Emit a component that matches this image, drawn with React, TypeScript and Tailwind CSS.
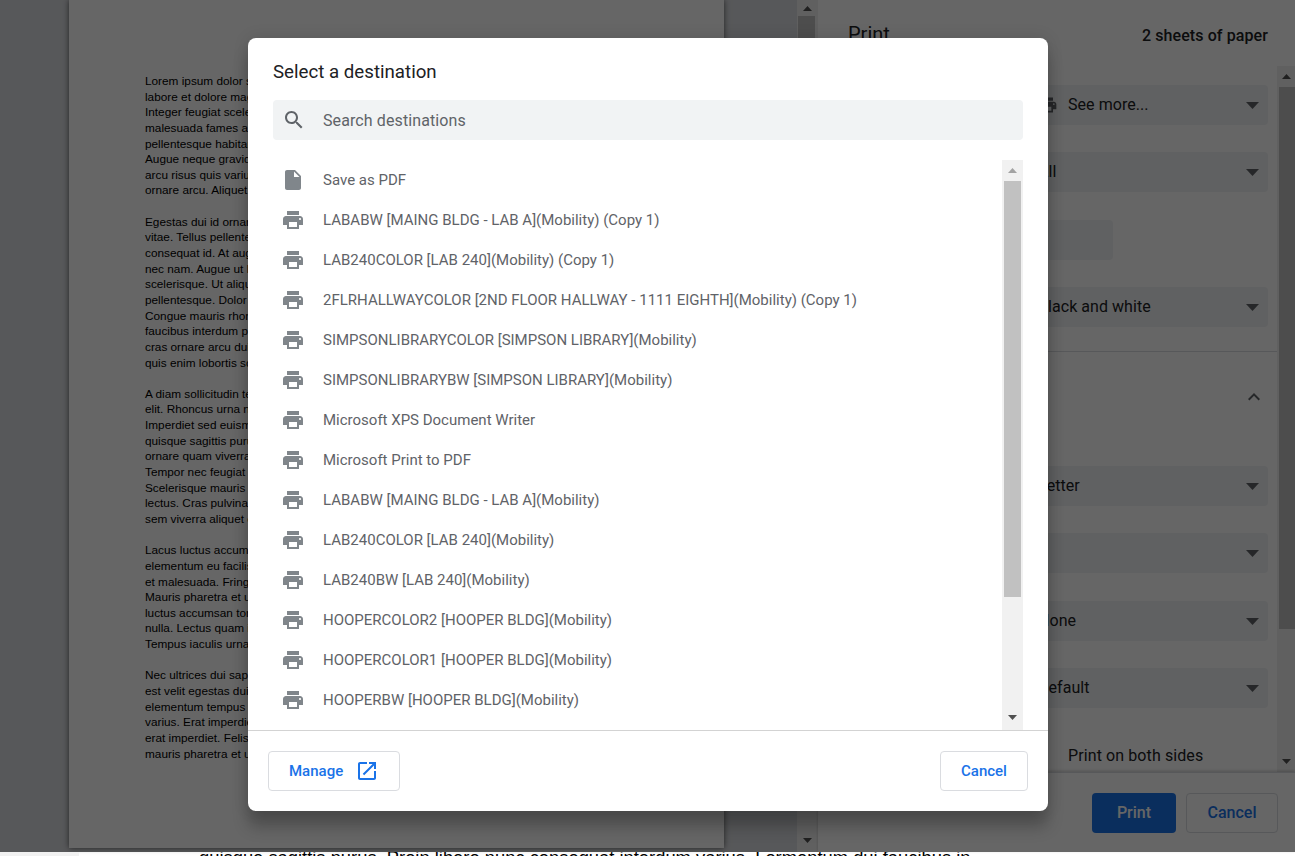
import React from 'react';

const destinations = [
    'LABABW [MAING BLDG - LAB A](Mobility) (Copy 1)',
    'LAB240COLOR [LAB 240](Mobility) (Copy 1)',
    '2FLRHALLWAYCOLOR [2ND FLOOR HALLWAY - 1111 EIGHTH](Mobility) (Copy 1)',
    'SIMPSONLIBRARYCOLOR [SIMPSON LIBRARY](Mobility)',
    'SIMPSONLIBRARYBW [SIMPSON LIBRARY](Mobility)',
    'Microsoft XPS Document Writer',
    'Microsoft Print to PDF',
    'LABABW [MAING BLDG - LAB A](Mobility)',
    'LAB240COLOR [LAB 240](Mobility)',
    'LAB240BW [LAB 240](Mobility)',
    'HOOPERCOLOR2 [HOOPER BLDG](Mobility)',
    'HOOPERCOLOR1 [HOOPER BLDG](Mobility)',
    'HOOPERBW [HOOPER BLDG](Mobility)',
];

const pageLines = [
    'Lorem ipsum dolor sit amet, consectetur adipiscing elit, sed do eiusmod tempor incididunt ut',
    'labore et dolore magna aliqua. Lectus urna duis convallis convallis tellus id interdum.',
    'Integer feugiat scelerisque varius morbi enim nunc faucibus a pellentesque.',
    'malesuada fames ac turpis egestas integer eget aliquet nibh praesent.',
    'pellentesque habitant morbi tristique senectus et netus et malesuada.',
    'Augue neque gravida in fermentum et sollicitudin ac orci phasellus.',
    'arcu risus quis varius quam quisque id diam vel quam elementum.',
    'ornare arcu. Aliquet nibh praesent tristique magna sit amet purus.',
    '',
    'Egestas dui id ornare arcu odio ut sem nulla pharetra diam sit amet.',
    'vitae. Tellus pellentesque eu tincidunt tortor aliquam nulla facilisi.',
    'consequat id. At augue eget arcu dictum varius duis at consectetur.',
    'nec nam. Augue ut lectus arcu bibendum at varius vel pharetra vel.',
    'scelerisque. Ut aliquam purus sit amet luctus venenatis lectus magna.',
    'pellentesque. Dolor sed viverra ipsum nunc aliquet bibendum enim.',
    'Congue mauris rhoncus aenean vel elit scelerisque mauris pellentesque.',
    'faucibus interdum posuere lorem ipsum dolor sit amet consectetur.',
    'cras ornare arcu dui vivamus arcu felis bibendum ut tristique et.',
    'quis enim lobortis scelerisque fermentum dui faucibus in ornare.',
    '',
    'A diam sollicitudin tempor id eu nisl nunc mi ipsum faucibus vitae.',
    'elit. Rhoncus urna neque viverra justo nec ultrices dui sapien eget.',
    'Imperdiet sed euismod nisi porta lorem mollis aliquam ut porttitor.',
    'quisque sagittis purus sit amet volutpat consequat mauris nunc.',
    'ornare quam viverra orci sagittis eu volutpat odio facilisis mauris.',
    'Tempor nec feugiat nisl pretium fusce id velit ut tortor pretium.',
    'Scelerisque mauris pellentesque pulvinar pellentesque habitant morbi.',
    'lectus. Cras pulvinar mattis nunc sed blandit libero volutpat sed.',
    'sem viverra aliquet eget sit amet tellus cras adipiscing enim eu.',
    '',
    'Lacus luctus accumsan tortor posuere ac ut consequat semper viverra.',
    'elementum eu facilisis sed odio morbi quis commodo odio aenean.',
    'et malesuada. Fringilla est ullamcorper eget nulla facilisi etiam.',
    'Mauris pharetra et ultrices neque ornare aenean euismod elementum.',
    'luctus accumsan tortor posuere ac ut consequat semper viverra nam.',
    'nulla. Lectus quam id leo in vitae turpis massa sed elementum.',
    'Tempus iaculis urna id volutpat lacus laoreet non curabitur gravida.',
    '',
    'Nec ultrices dui sapien eget mi proin sed libero enim sed faucibus.',
    'est velit egestas dui id ornare arcu odio ut sem nulla pharetra.',
    'elementum tempus egestas sed sed risus pretium quam vulputate.',
    'varius. Erat imperdiet sed euismod nisi porta lorem mollis aliquam.',
    'erat imperdiet. Felis eget velit aliquet sagittis id consectetur.',
    'mauris pharetra et ultrices neque ornare aenean euismod elementum.',
];

function PrintIcon({ className }: { className: string }) {
    return (
        <svg viewBox="0 0 24 24" className={className} fill="currentColor">
            <path d="M19 8H5c-1.66 0-3 1.34-3 3v6h4v4h12v-4h4v-6c0-1.66-1.34-3-3-3zm-3 11H8v-5h8v5zm3-7c-.55 0-1-.45-1-1s.45-1 1-1 1 .45 1 1-.45 1-1 1zm-1-9H6v4h12V3z" />
        </svg>
    );
}

function Arrow({ up, className }: { up?: boolean; className: string }) {
    return (
        <svg viewBox="0 0 9 5" className={`w-[9px] h-[5px] ${className}`} fill="currentColor">
            <polygon points={up ? '4.5,0 9,5 0,5' : '0,0 9,0 4.5,5'} />
        </svg>
    );
}

function SelectBox({ text, icon, nudge }: { text: string; icon?: boolean; nudge?: boolean }) {
    return (
        <div className={`h-10 w-[238px] ml-[212px] rounded bg-[#f1f3f4] flex items-center pl-2 pr-[9px] text-[16px] tracking-[0.05px] text-[#202124] ${nudge ? 'mt-px' : ''}`}>
            {icon && <PrintIcon className="w-5 h-5 mr-[10px] text-[#5f6368]" />}
            <span>{text}</span>
            <svg viewBox="0 0 13 7" className="w-[13px] h-[7px] ml-auto text-[#5f6368]" fill="currentColor">
                <polygon points="0,0 13,0 6.5,7" />
            </svg>
        </div>
    );
}

function Sidebar() {
    return (
        <div className="w-[477px] flex flex-col bg-white font-['Roboto',sans-serif]">
            <div className="h-[66px] flex items-start justify-between pl-[30px] pr-[27px] pt-[22px] shrink-0">
                <span className="text-[20px] leading-6 text-[#202124]">Print</span>
                <span className="text-[16px] leading-[28px] tracking-[0.1px] font-medium text-[#202124]">2 sheets of paper</span>
            </div>
            <div className="flex-1 flex min-h-0">
                <div className="w-[459px] pt-[19px]">
                    <div className="flex flex-col gap-[27px]">
                        <SelectBox text="See more..." icon />
                        <SelectBox text="All" />
                        <div className="h-10 w-[83px] ml-[212px] mt-px rounded bg-[#f1f3f4]" />
                        <SelectBox text="Black and white" />
                    </div>
                    <div className="mt-6 border-t border-[#dadce0]" />
                    <div className="h-[92px] flex items-center justify-end pr-[13px] pb-[2px]">
                        <svg viewBox="0 0 24 24" className="w-6 h-6 text-[#5f6368] mr-[-2px]" fill="currentColor">
                            <path d="M7.41 15.41L12 10.83l4.59 4.58L18 14l-6-6-6 6z" />
                        </svg>
                    </div>
                    <div className="flex flex-col gap-[27px] mt-[22px]">
                        <SelectBox text="Letter" />
                        <SelectBox text="1" />
                        <SelectBox text="None" nudge />
                        <SelectBox text="Default" />
                    </div>
                    <div className="ml-[250px] mt-[38px] text-[16px] tracking-[0.1px] leading-5 text-[#202124]">Print on both sides</div>
                </div>
                <div className="w-[18px] flex flex-col bg-[#f1f1f1]">
                    <div className="h-[21px] flex items-center justify-center"><Arrow up className="text-[#505050]" /></div>
                    <div className="h-[542px] ml-[2px] bg-[#c1c1c1]" />
                    <div className="flex-1" />
                    <div className="h-[21px] flex items-center justify-center"><Arrow className="text-[#505050]" /></div>
                </div>
            </div>
            <div className="h-20 shrink-0 border-t border-[#dadce0] shadow-[0_-1px_3px_rgba(0,0,0,0.2)] flex items-center justify-end gap-[10px] pr-[17px] text-[16px] font-medium">
                <div className="h-10 w-[84px] rounded bg-[#1a73e8] text-white flex items-center justify-center pt-px">Print</div>
                <div className="h-10 w-[92px] rounded border border-[#dadce0] text-[#1a73e8] flex items-center justify-center pt-px">Cancel</div>
            </div>
        </div>
    );
}

function DestinationDialog() {
    return (
        <div className="w-[800px] h-[773px] rounded-lg bg-white flex flex-col font-['Roboto',sans-serif] shadow-[0_0_16px_rgba(0,0,0,0.12),0_16px_16px_rgba(0,0,0,0.24)]">
            <div className="h-[62px] shrink-0 pl-[25px] pt-[21px] text-[18.7px] leading-[27px] text-[#202124]">Select a destination</div>
            <div className="mx-[25px] h-10 shrink-0 rounded bg-[#f1f3f4] flex items-center pl-[9px] text-[16px] tracking-[0.1px] text-[#5f6368]">
                <svg viewBox="0 0 24 24" className="w-6 h-6 mr-[17px]" fill="currentColor">
                    <path d="M15.5 14h-.79l-.28-.27C15.41 12.59 16 11.11 16 9.5 16 5.91 13.09 3 9.5 3S3 5.91 3 9.5 5.91 16 9.5 16c1.61 0 3.09-.59 4.23-1.57l.27.28v.79l5 4.99L20.49 19l-4.99-5zm-6 0C7.01 14 5 11.99 5 9.5S7.01 5 9.5 5 14 7.01 14 9.5 11.99 14 9.5 14z" />
                </svg>
                <span className="pt-px">Search destinations</span>
            </div>
            <div className="mt-5 mx-[25px] h-[570px] shrink-0 flex">
                <div className="flex-1 overflow-hidden text-[15px] text-[#5f6368]">
                    <div className="h-10 flex items-center pl-2">
                        <svg viewBox="0 0 24 24" className="w-6 h-6 mr-[18px] text-[#80868b]" fill="currentColor">
                            <path d="M6 2c-1.1 0-2 .9-2 2v16c0 1.1.9 2 2 2h12c1.1 0 2-.9 2-2V8l-6-6H6zm7 7V3.5L18.5 9H13z" />
                        </svg>
                        <span className="pt-px">Save as PDF</span>
                    </div>
                    {destinations.map((name, i) => (
                        <div key={i} className="h-10 flex items-center pl-2">
                            <PrintIcon className="w-6 h-6 mr-[18px] text-[#80868b]" />
                            <span className="pt-px">{name}</span>
                        </div>
                    ))}
                </div>
                <div className="w-[21px] flex flex-col bg-[#f1f1f1]">
                    <div className="h-[21px] shrink-0 flex items-center justify-center"><Arrow up className="text-[#a3a3a3]" /></div>
                    <div className="h-[416px] mx-[2px] bg-[#c1c1c1]" />
                    <div className="flex-1" />
                    <div className="h-[21px] shrink-0 flex items-center justify-center pb-[5px]"><Arrow className="text-[#505050]" /></div>
                </div>
            </div>
            <div className="border-t border-[#d3d3d3] flex-1 flex items-start justify-between pt-5 pl-5 pr-5 text-[#1a73e8] font-medium text-[15px]">
                <div className="h-10 w-[132px] rounded border border-[#dadce0] flex items-center pl-[20px]">
                    <span className="pt-px">Manage</span>
                    <svg viewBox="0 0 24 24" className="w-6 h-6 ml-[12px]" fill="currentColor">
                        <path d="M19 19H5V5h7V3H5c-1.11 0-2 .9-2 2v14c0 1.1.89 2 2 2h14c1.1 0 2-.9 2-2v-7h-2v7zM14 3v2h3.59l-9.83 9.83 1.41 1.41L19 6.41V10h2V3h-7z" />
                    </svg>
                </div>
                <div className="h-10 w-[88px] rounded border border-[#dadce0] flex items-center justify-center">Cancel</div>
            </div>
        </div>
    );
}

export default function App() {
    return (
        <div className="relative w-[1295px] h-[856px] overflow-hidden bg-white">
            <div className="h-[852px] flex">
                <div className="w-[797px] bg-[#dadce0] pl-[69px]">
                    <div className="w-[655px] h-[848px] bg-white shadow-[0_0_6px_rgba(0,0,0,0.6)] pt-[74px] pl-[76px] overflow-hidden font-['Liberation_Sans',Arial,sans-serif] text-[11.8px] leading-[15.65px] text-black">
                        {pageLines.map((line, i) => (
                            <div key={i} className="h-[15.65px] whitespace-nowrap">{line}</div>
                        ))}
                    </div>
                </div>
                <div className="w-[21px] flex flex-col bg-[#f1f1f1]">
                    <div className="h-4 flex items-center justify-center"><Arrow up className="text-[#505050]" /></div>
                    <div className="h-[400px] ml-px mr-[3px] bg-[#c1c1c1]" />
                    <div className="flex-1" />
                    <div className="h-6 flex items-center justify-center"><Arrow className="text-[#505050]" /></div>
                </div>
                <Sidebar />
            </div>
            <div className="h-1 overflow-hidden flex bg-white">
                <div className="w-[79px] bg-[#f1f1f1] shrink-0" />
                <div className="pl-[120px] -mt-[4px] text-[18.37px] leading-5 whitespace-nowrap font-['Liberation_Sans',Arial,sans-serif] text-black">
                    quisque sagittis purus. Proin libero nunc consequat interdum varius. Lormentum dui faucibus in
                </div>
            </div>
            <div className="absolute inset-x-0 top-0 h-[852px] bg-black/60 flex justify-center items-start pt-[38px] pl-px">
                <DestinationDialog />
            </div>
        </div>
    );
}
